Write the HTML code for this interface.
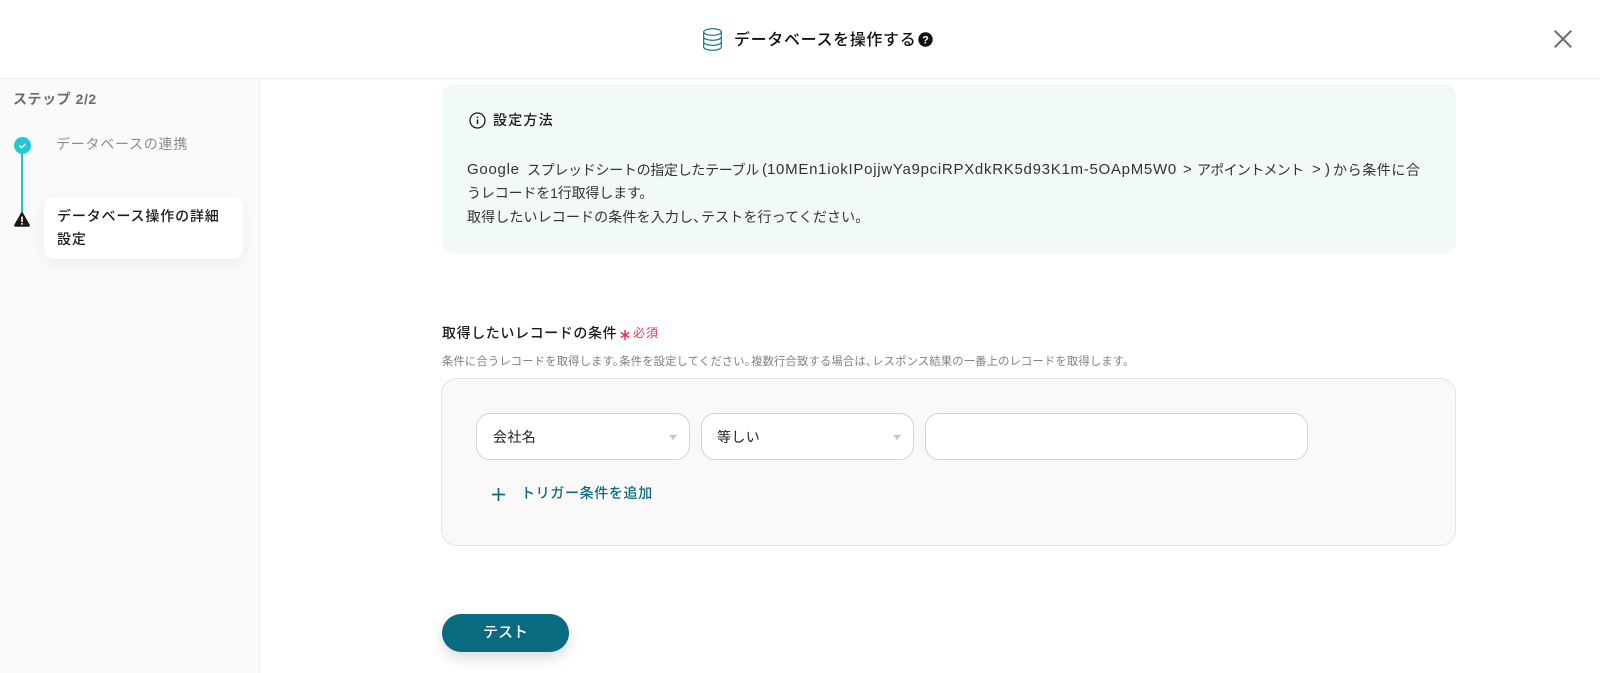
<!DOCTYPE html>
<html lang="ja"><head><meta charset="utf-8"><title>データベースを操作する</title>
<style>
html,body{margin:0;padding:0;background:#fff}
body{width:1600px;height:673px;position:relative;overflow:hidden;font-family:"Liberation Sans","Noto Sans CJK JP",sans-serif;color:#1a1a1a}
.a{position:absolute;white-space:nowrap}
svg{position:absolute;display:block}
.t{font-size:14px;line-height:24px;color:#333;letter-spacing:.2px}
.l{font-size:15px;letter-spacing:.72px}
.n{margin-right:-.45em}
.sel{background:#fff;border:1px solid #d2d2d2;border-radius:14px;box-sizing:border-box;height:47px;top:413px}
.arr{width:0;height:0;border-left:4.500px solid transparent;border-right:4.500px solid transparent;border-top:5px solid #c8c8c8;top:435px}
</style></head><body>
<div class="a" style="left:0;top:0;width:1600px;height:78px;background:#fff;border-bottom:1px solid #ebebeb"></div>
<svg style="left:703px;top:28px" width="19" height="23" viewBox="0 0 19 23" fill="none" stroke="#0a6a80" stroke-width="1.100"><ellipse cx="9.500" cy="4" rx="8.800" ry="3.300"/><path d="M.7 4v15c0 1.800 3.900 3.300 8.800 3.300s8.800-1.500 8.800-3.300V4"/><path d="M.7 9c0 1.800 3.900 3.300 8.800 3.300S18.300 10.800 18.300 9M.7 14c0 1.800 3.900 3.300 8.800 3.300s8.800-1.500 8.800-3.300"/></svg>
<div class="a" style="left:734px;top:29px;font-size:16px;letter-spacing:.65px;line-height:24px;font-weight:500;color:#111">データベースを操作する</div>
<svg style="left:918px;top:32px" width="15" height="15" viewBox="0 0 15 15"><circle cx="7.500" cy="7.500" r="7.200" fill="#111"/><text x="7.500" y="11.500" text-anchor="middle" font-size="11" font-weight="700" fill="#fff" font-family="Liberation Sans">?</text></svg>
<svg style="left:1554px;top:30px" width="18" height="18" viewBox="0 0 18 18" stroke="#6b6b6b" stroke-width="2"><path d="M.7.7l16.600 16.600M17.300.7L.7 17.300"/></svg>

<div class="a" style="left:0;top:79px;width:259px;height:594px;background:#fafafa;border-right:1px solid #eee"></div>
<div class="a" style="left:13px;top:89px;font-size:14px;letter-spacing:.55px;line-height:20px;font-weight:700;color:#6b6b6b">ステップ 2/2</div>
<div class="a" style="left:21px;top:152px;width:2px;height:62px;background:#1cc8d0"></div>
<svg style="left:14px;top:137px" width="17" height="17" viewBox="0 0 17 17"><defs><linearGradient id="g" x1="0" y1="1" x2="1" y2="0"><stop offset="0" stop-color="#1fcfc0"/><stop offset="1" stop-color="#22c0e8"/></linearGradient></defs><circle cx="8.500" cy="8.500" r="8.500" fill="url(#g)"/><path d="M5.300 8.500l2.300 2.200 4-4" fill="none" stroke="#fff" stroke-width="1.400"/></svg>
<svg style="left:14px;top:212px" width="16" height="15" viewBox="0 0 16 15"><path d="M8 .3c.4 0 .7.200.9.500l6.800 12c.4.800-.1 1.900-.9 1.900H1.200c-.8 0-1.300-1.100-.9-1.900L7.100.8c.2-.3.500-.5.900-.5z" fill="#1a1a1a"/><rect x="7.200" y="4.500" width="1.600" height="5.500" fill="#fff"/><rect x="7.200" y="11" width="1.600" height="1.700" fill="#fff"/></svg>
<div class="a" style="left:56px;top:134px;font-size:14px;letter-spacing:.75px;line-height:20px;color:#8c8c8c">データベースの連携</div>
<div class="a" style="left:44px;top:197px;width:199px;height:62px;background:#fff;border-radius:10px;box-shadow:0 4px 16px rgba(0,0,0,.06)"></div>
<div class="a" style="left:57px;top:205px;font-size:14px;letter-spacing:.85px;line-height:22.500px;font-weight:500;color:#1a1a1a">データベース操作の詳細<br>設定</div>

<div class="a" style="left:442px;top:84px;width:1014px;height:169px;background:#f1faf9;border-radius:12px"></div>
<svg style="left:469px;top:112px" width="17" height="17" viewBox="0 0 17 17" fill="none" stroke="#1a1a1a" stroke-width="1.300"><circle cx="8.500" cy="8.500" r="7.500"/><path d="M8.500 7.500v4.500" stroke-width="1.500"/><path d="M8.500 4.600v1.500" stroke-width="1.500"/></svg>
<div class="a" style="left:493px;top:110px;font-size:14px;letter-spacing:1.200px;line-height:20px;font-weight:500;color:#1a1a1a">設定方法</div>

<div class="a t l" style="left:467px;top:158px">Google</div>
<div class="a t" style="left:527px;top:158px;letter-spacing:-.3px">スプレッドシートの指定したテーブル</div>
<div class="a t l" style="left:762px;top:158px">(</div>
<div class="a t l" style="left:767px;top:158px">10MEn1iokIPojjwYa9pciRPXdkRK5d93K1m-5OApM5W0</div>
<div class="a t l" style="left:1183px;top:158px">&gt;</div>
<div class="a t" style="left:1197px;top:158px;letter-spacing:-.7px">アポイントメント</div>
<div class="a t l" style="left:1312px;top:158px">&gt;</div>
<div class="a t l" style="left:1325px;top:158px">)</div>
<div class="a t" style="left:1333px;top:158px;letter-spacing:.6px">から条件に合</div>
<div class="a t" style="left:467px;top:181px;letter-spacing:-.15px">うレコードを1行取得します。</div>
<div class="a t" style="left:467px;top:205px;letter-spacing:.13px">取得したいレコードの条件を入力し<span class="n">、</span>テストを行ってください。</div>

<div class="a" style="left:442px;top:323px;font-size:14px;letter-spacing:.6px;line-height:20px;font-weight:500;color:#1a1a1a">取得したいレコードの条件</div>
<svg style="left:620px;top:330px" width="10" height="10" viewBox="0 0 10 10" stroke="#f0304f" stroke-width="1.500"><path d="M5 0v10M.7 2.500l8.600 5M9.300 2.500L.7 7.500"/></svg>
<div class="a" style="left:633px;top:324px;font-size:12px;letter-spacing:1px;line-height:18px;color:#f0304f">必須</div>
<div class="a" style="left:442px;top:354px;font-size:11.300px;letter-spacing:.17px;line-height:16px;color:#808080">条件に合うレコードを取得します<span class="n">。</span>条件を設定してください<span class="n">。</span>複数行合致する場合は<span class="n">、</span>レスポンス結果の一番上のレコードを取得します。</div>

<div class="a" style="left:441px;top:378px;width:1015px;height:168px;box-sizing:border-box;background:#f9f9f9;border:1px solid #e4e4e4;border-radius:16px"></div>
<div class="a sel" style="left:476px;width:214px"></div>
<div class="a" style="left:493px;top:427px;font-size:14px;letter-spacing:.4px;line-height:20px;color:#222">会社名</div>
<div class="a arr" style="left:669px"></div>
<div class="a sel" style="left:701px;width:213px"></div>
<div class="a" style="left:717px;top:427px;font-size:14px;letter-spacing:.4px;line-height:20px;color:#222">等しい</div>
<div class="a arr" style="left:893px"></div>
<div class="a sel" style="left:925px;width:383px"></div>
<svg style="left:492px;top:488px" width="13" height="13" viewBox="0 0 13 13" stroke="#0a6a80" stroke-width="1.700"><path d="M6.500 0v13M0 6.500h13"/></svg>
<div class="a" style="left:521px;top:483px;font-size:14px;letter-spacing:.65px;line-height:20px;font-weight:500;color:#0a6a80">トリガー条件を追加</div>

<div class="a" style="left:442px;top:614px;width:127px;height:38px;background:#0a6a80;border-radius:19px;box-shadow:0 6px 14px rgba(0,0,0,.14);color:#fff;font-size:15px;line-height:38px;text-align:center;font-weight:500">テスト</div>
</body></html>
